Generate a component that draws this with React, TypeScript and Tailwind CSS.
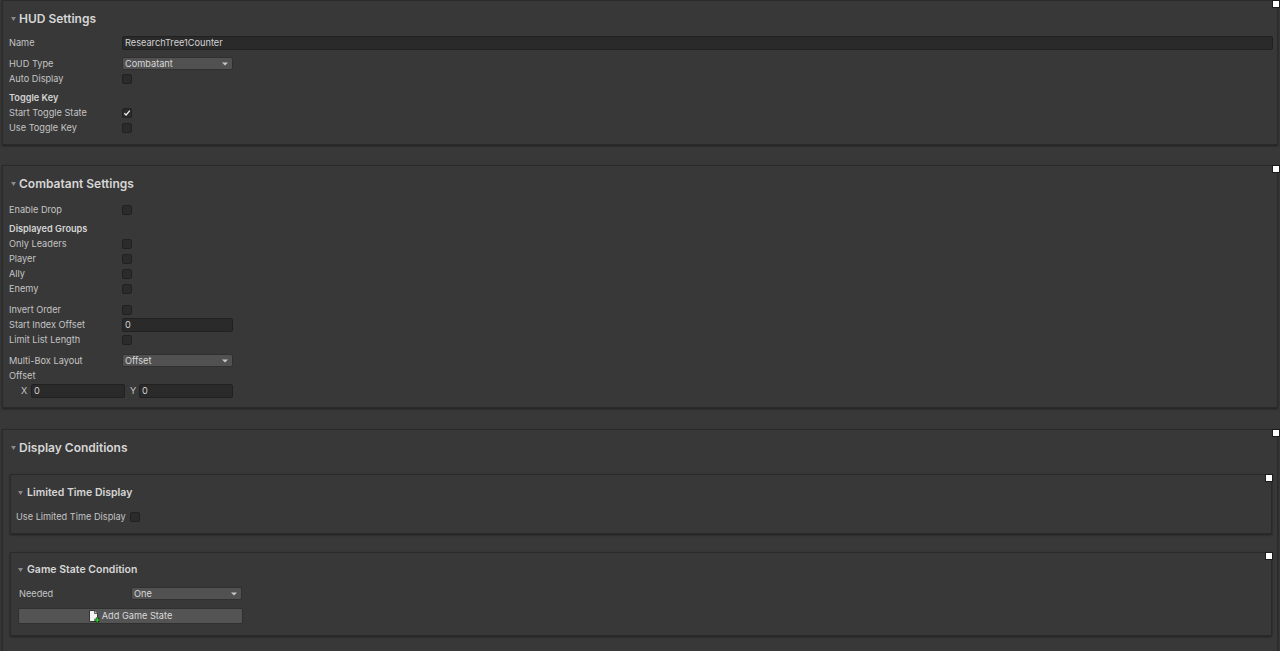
import React from "react";

const LBL = "text-[9.2px] leading-none text-[#c4c4c4] whitespace-nowrap";

function Tri() {
  return (
    <svg width="5" height="4" viewBox="0 0 5 4" className="shrink-0">
      <path d="M0 0 L5 0 L2.5 4 Z" fill="#8a8a8a" />
    </svg>
  );
}

function Square({ sub }: { sub?: boolean }) {
  return (
    <div
      className={
        "absolute w-[8px] h-[8px] bg-white border border-[#1c1c1c] " +
        (sub ? "right-[-2px] top-[-1px]" : "right-[-3px] top-[-1px]")
      }
    />
  );
}

function Checkbox({ checked }: { checked?: boolean }) {
  return (
    <div className="w-[10px] h-[10px] rounded-[2px] bg-[#2b2b2b] border border-[#212121] flex items-center justify-center">
      {checked && (
        <svg width="8" height="8" viewBox="0 0 8 8">
          <path d="M1.3 4.3 L3.1 6 L6.8 1.6" stroke="#f0f0f0" strokeWidth="1.3" fill="none" />
        </svg>
      )}
    </div>
  );
}

function Field({ value, className }: { value: string; className: string }) {
  return (
    <div
      className={
        "h-[14px] rounded-[2px] bg-[#2a2a2a] border border-[#212121] flex items-center pl-[2px] text-[9.2px] leading-none text-[#d2d2d2] " +
        className
      }
    >
      {value}
    </div>
  );
}

function Dropdown({ value, className }: { value: string; className: string }) {
  return (
    <div
      className={
        "h-[13px] rounded-[2px] bg-[#515151] border border-[#303030] flex items-center justify-between pl-[2px] pr-[4px] text-[9.2px] leading-none text-[#d8d8d8] " +
        className
      }
    >
      <span>{value}</span>
      <svg width="6" height="4" viewBox="0 0 6 4">
        <path d="M0 0.5 L6 0.5 L3 3.5 Z" fill="#c8c8c8" />
      </svg>
    </div>
  );
}

function Row({
  label,
  children,
  className = "",
  lw = "w-[113px]",
}: {
  label: string;
  children?: React.ReactNode;
  className?: string;
  lw?: string;
}) {
  return (
    <div className={"h-[15px] flex items-center " + className}>
      <div className={LBL + " shrink-0 " + lw}>{label}</div>
      {children}
    </div>
  );
}

function BoldRow({ label, className = "" }: { label: string; className?: string }) {
  return (
    <div className={"flex items-center " + className}>
      <div className="text-[9.2px] leading-none font-semibold text-[#d4d4d4]">{label}</div>
    </div>
  );
}

function SectionHeader({ title }: { title: string }) {
  return (
    <div className="h-[24px] flex items-center pl-[2px]">
      <Tri />
      <span className="ml-[3px] text-[12px] leading-none font-semibold text-[#d6d6d6]">{title}</span>
    </div>
  );
}

function SubHeader({ title }: { title: string }) {
  return (
    <div className="h-[22px] flex items-center pl-[7px]">
      <Tri />
      <span className="ml-[4px] text-[10.5px] leading-none font-semibold text-[#d6d6d6]">{title}</span>
    </div>
  );
}

function AddIcon() {
  return (
    <svg width="12" height="13" viewBox="0 0 12 13" className="shrink-0">
      <path d="M0.5 0.5 H5.5 L8.5 3.5 V11.5 H0.5 Z" fill="#f2f2f2" stroke="#1a1a1a" strokeWidth="0.8" />
      <path d="M5.5 0.5 V3.5 H8.5" fill="#b5b5b5" stroke="#1a1a1a" strokeWidth="0.6" />
      <path d="M8.2 7.4 V12.8 M5.5 10.1 H10.9" stroke="#1a1a1a" strokeWidth="2.6" />
      <path d="M8.2 7.6 V12.6 M5.7 10.1 H10.7" stroke="#2fc12f" strokeWidth="1.5" />
    </svg>
  );
}

export default function App() {
  return (
    <div className="w-[1280px] h-[651px] overflow-hidden bg-[#383838] font-['Inter',sans-serif]">
      {/* HUD Settings */}
      <div className="relative ml-[2px] w-[1276px] border border-[#2a2a2a] bg-[#383838] shadow-[0_1px_2px_rgba(0,0,0,0.45)] pl-[6px] pr-[4px] pt-[6px] pb-[9px]">
        <Square />
        <SectionHeader title="HUD Settings" />
        <Row label="Name" className="mt-[4px]">
          <Field value="ResearchTree1Counter" className="flex-1" />
        </Row>
        <Row label="HUD Type" className="mt-[6px]">
          <Dropdown value="Combatant" className="w-[111px]" />
        </Row>
        <Row label="Auto Display">
          <Checkbox />
        </Row>
        <BoldRow label="Toggle Key" className="mt-[5px] h-[14px]" />
        <Row label="Start Toggle State">
          <Checkbox checked />
        </Row>
        <Row label="Use Toggle Key">
          <Checkbox />
        </Row>
      </div>

      {/* Combatant Settings */}
      <div className="relative mt-[20px] ml-[2px] w-[1276px] border border-[#2a2a2a] bg-[#383838] shadow-[0_1px_2px_rgba(0,0,0,0.45)] pl-[6px] pr-[4px] pt-[6px] pb-[9px]">
        <Square />
        <SectionHeader title="Combatant Settings" />
        <Row label="Enable Drop" className="mt-[6px]">
          <Checkbox />
        </Row>
        <BoldRow label="Displayed Groups" className="mt-[5px] h-[14px]" />
        <Row label="Only Leaders">
          <Checkbox />
        </Row>
        <Row label="Player">
          <Checkbox />
        </Row>
        <Row label="Ally">
          <Checkbox />
        </Row>
        <Row label="Enemy">
          <Checkbox />
        </Row>
        <Row label="Invert Order" className="mt-[6px]">
          <Checkbox />
        </Row>
        <Row label="Start Index Offset">
          <Field value="0" className="w-[111px]" />
        </Row>
        <Row label="Limit List Length">
          <Checkbox />
        </Row>
        <Row label="Multi-Box Layout" className="mt-[6px]">
          <Dropdown value="Offset" className="w-[111px]" />
        </Row>
        <Row label="Offset" />
        <div className="h-[15px] flex items-center">
          <span className={LBL + " ml-[12px] w-[10px]"}>X</span>
          <Field value="0" className="w-[94px]" />
          <span className={LBL + " ml-[5px] w-[9px]"}>Y</span>
          <Field value="0" className="w-[94px]" />
        </div>
      </div>

      {/* Display Conditions */}
      <div className="relative mt-[21px] ml-[2px] w-[1276px] h-[260px] border border-[#2a2a2a] bg-[#383838] shadow-[0_1px_2px_rgba(0,0,0,0.45)] pl-[6px] pr-[4px] pt-[6px]">
        <Square />
        <SectionHeader title="Display Conditions" />

        <div className="relative mt-[14px] ml-[1px] w-[1262px] border border-[#2a2a2a] shadow-[0_1px_2px_rgba(0,0,0,0.45)] pt-[7px] pb-[9px]">
          <Square sub />
          <SubHeader title="Limited Time Display" />
          <Row label="Use Limited Time Display" className="mt-[5px] pl-[5px]" lw="w-[114px]">
            <Checkbox />
          </Row>
        </div>

        <div className="relative mt-[18px] ml-[1px] w-[1262px] border border-[#2a2a2a] shadow-[0_1px_2px_rgba(0,0,0,0.45)] pt-[6px] pb-[11px]">
          <Square sub />
          <SubHeader title="Game State Condition" />
          <Row label="Needed" className="mt-[5px] pl-[8px]" lw="w-[112px]">
            <Dropdown value="One" className="w-[111px]" />
          </Row>
          <div className="mt-[7px] ml-[7px] w-[225px] h-[16px] rounded-[2px] bg-[#545454] border border-[#303030] flex items-center justify-center gap-[1px] text-[9.2px] leading-none text-[#dadada]">
            <AddIcon />
            <span>Add Game State</span>
          </div>
        </div>
      </div>
    </div>
  );
}
